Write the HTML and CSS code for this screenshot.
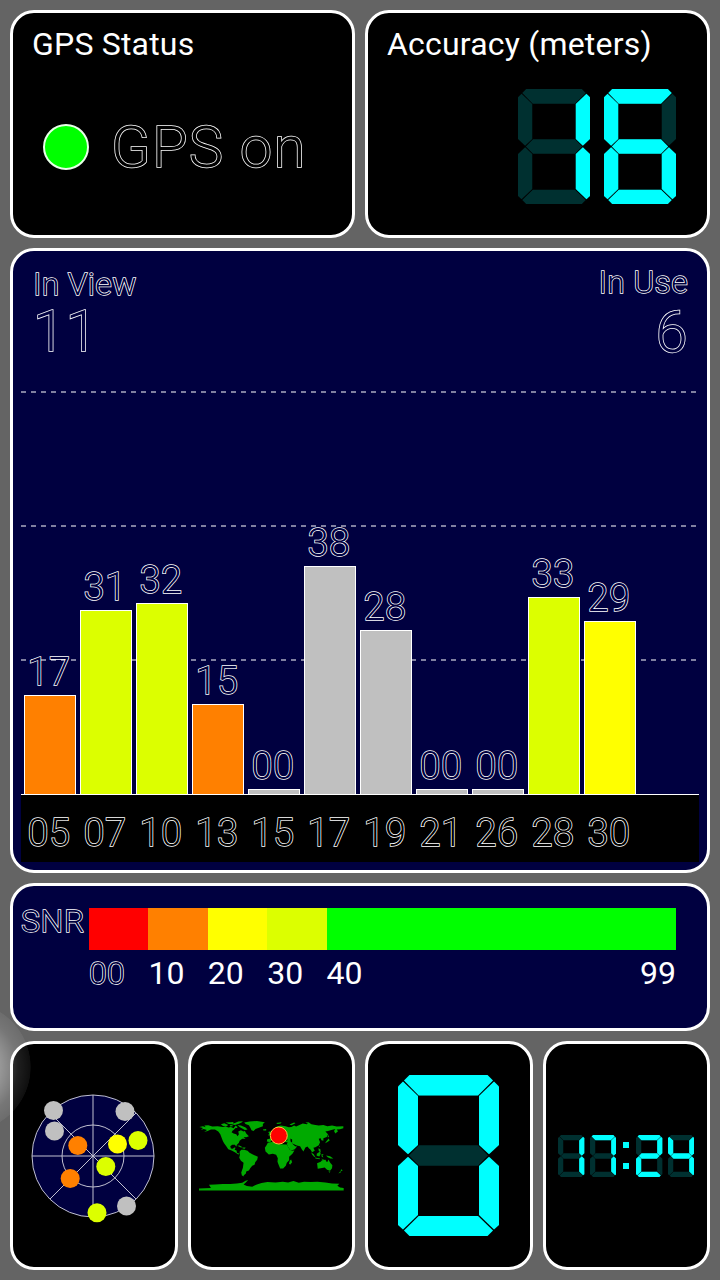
FILE: index.html
```html
<!DOCTYPE html>
<html lang="en">
<head>
    <meta charset="UTF-8">
    <meta name="viewport" content="width=device-width, initial-scale=1.0">
    <title>GPS Status</title>
    <link rel="stylesheet" href="styles.css">
</head>
<body>
    <!-- Seven segment digits -->
    <svg class="defs" width="0" height="0">
        <defs>
            <path id="sa" d="M6 5.5L11.5 0H89.5L95 5.5L80 20.5H20.7Z"/>
            <path id="sb" d="M96 6.5L101 11.5V70L91 79.3L81 70V21Z"/>
            <path id="sc" d="M91 81.7L101 91V150L96 154.5L81 140V91Z"/>
            <path id="sd" d="M6 155.5L11.5 161H89.5L95 155.5L80 141H20.7Z"/>
            <path id="se" d="M10 81.7L0 91V150L5 154.5L20 140V91Z"/>
            <path id="sf" d="M5 6.5L0 11.5V70L10 79.3L20 70V21Z"/>
            <path id="sg" d="M11 80.5L21 70.3H80L90 80.5L80 90.8H21Z"/>
            <g id="off" class="off">
                <use href="#sa"/><use href="#sb"/><use href="#sc"/><use href="#sd"/><use href="#se"/><use href="#sf"/><use href="#sg"/>
            </g>
            <g id="n0"><use href="#off"/><use href="#sa"/><use href="#sb"/><use href="#sc"/><use href="#sd"/><use href="#se"/><use href="#sf"/></g>
            <g id="n1"><use href="#off"/><use href="#sb"/><use href="#sc"/></g>
            <g id="n2"><use href="#off"/><use href="#sa"/><use href="#sb"/><use href="#sg"/><use href="#se"/><use href="#sd"/></g>
            <g id="n4"><use href="#off"/><use href="#sf"/><use href="#sg"/><use href="#sb"/><use href="#sc"/></g>
            <g id="n6"><use href="#off"/><use href="#sa"/><use href="#sf"/><use href="#sg"/><use href="#se"/><use href="#sc"/><use href="#sd"/></g>
            <g id="n7"><use href="#off"/><use href="#sa"/><use href="#sb"/><use href="#sc"/></g>
        </defs>
    </svg>

    <div class="screen">
        <div class="row">
            <div class="panel status">
                <h2>GPS Status</h2>
                <div class="state">
                    <span class="led"></span>
                    <span class="outline big gps-on">GPS on</span>
                </div>
            </div>
            <div class="panel accuracy">
                <h2>Accuracy (meters)</h2>
                <div class="lcd">
                    <svg viewBox="0 0 101 161"><use href="#n1"/></svg>
                    <svg viewBox="0 0 101 161"><use href="#n6"/></svg>
                </div>
            </div>
        </div>

        <!-- Satellite signal chart -->
        <div class="panel signal">
            <div class="counts">
                <div class="count">
                    <span class="outline">In View</span>
                    <span class="outline big">11</span>
                </div>
                <div class="count right">
                    <span class="outline">In Use</span>
                    <span class="outline big">6</span>
                </div>
            </div>
            <div class="plot">
                <div class="sat"><span class="outline">17</span><i class="bar orange" style="height: 99px"></i></div>
                <div class="sat"><span class="outline">31</span><i class="bar lime" style="height: 184px"></i></div>
                <div class="sat"><span class="outline">32</span><i class="bar lime" style="height: 191px"></i></div>
                <div class="sat"><span class="outline">15</span><i class="bar orange" style="height: 90px"></i></div>
                <div class="sat"><span class="outline">00</span><i class="bar grey" style="height: 5px"></i></div>
                <div class="sat"><span class="outline">38</span><i class="bar grey" style="height: 228px"></i></div>
                <div class="sat"><span class="outline">28</span><i class="bar grey" style="height: 164px"></i></div>
                <div class="sat"><span class="outline">00</span><i class="bar grey" style="height: 5px"></i></div>
                <div class="sat"><span class="outline">00</span><i class="bar grey" style="height: 5px"></i></div>
                <div class="sat"><span class="outline">33</span><i class="bar lime" style="height: 197px"></i></div>
                <div class="sat"><span class="outline">29</span><i class="bar yellow" style="height: 173px"></i></div>
            </div>
            <div class="ids">
                <span class="outline">05</span>
                <span class="outline">07</span>
                <span class="outline">10</span>
                <span class="outline">13</span>
                <span class="outline">15</span>
                <span class="outline">17</span>
                <span class="outline">19</span>
                <span class="outline">21</span>
                <span class="outline">26</span>
                <span class="outline">28</span>
                <span class="outline">30</span>
            </div>
        </div>

        <!-- SNR scale -->
        <div class="panel snr">
            <span class="outline snr-name">SNR</span>
            <div class="scale">
                <div class="step"><i class="red"></i><span class="outline">00</span></div>
                <div class="step"><i class="orange"></i><span>10</span></div>
                <div class="step"><i class="yellow"></i><span>20</span></div>
                <div class="step"><i class="lime"></i><span>30</span></div>
                <div class="step last">
                    <i class="green"></i>
                    <div class="ends"><span>40</span><span>99</span></div>
                </div>
            </div>
        </div>

        <div class="row">
            <div class="panel tile">
                <svg class="radar" viewBox="0 0 124 124">
                    <g class="grid">
                        <circle class="sky" cx="62" cy="62" r="61"/>
                        <circle cx="62" cy="62" r="31"/>
                        <path d="M62 1V123M1 62H123M19 19L105 105M105 19L19 105"/>
                    </g>
                    <g fill="#c0c0c0">
                        <circle cx="22.5" cy="16.5" r="9.5"/>
                        <circle cx="23.5" cy="37" r="9.5"/>
                        <circle cx="94" cy="17.5" r="9.5"/>
                        <circle cx="95.5" cy="112" r="9.5"/>
                    </g>
                    <g fill="#ff8000">
                        <circle cx="46.8" cy="51.5" r="9.5"/>
                        <circle cx="39.2" cy="84.5" r="9.5"/>
                    </g>
                    <circle cx="86.5" cy="50" r="9.5" fill="#ffff00"/>
                    <g fill="#dcff00">
                        <circle cx="107" cy="46.5" r="9.5"/>
                        <circle cx="74.8" cy="72.5" r="9.5"/>
                        <circle cx="66" cy="118.8" r="9.5"/>
                    </g>
                </svg>
            </div>
            <div class="panel tile">
                <svg class="map" viewBox="24 62 436 212">
                    <g class="land">
                        <!-- North America -->
                        <path d="M25 82L36 80L44 83L40 78L52 77L64 81L80 80L96 82L104 80L112 84L120 82L128 86L134 78L140 82L136 90L126 92L122 98L128 102L136 104L140 110L144 104L142 96L150 92L158 96L162 94L166 102L174 110L166 113L158 112L164 118L154 118L146 124L144 130L138 136L136 142L132 136L124 136L118 140L120 147L126 148L130 144L134 145L131 151L137 153L138 160L146 163L142 165L132 158L122 153L112 149L106 140L100 132L96 125L92 115L88 104L82 96L72 90L60 90L50 94L40 97L48 91L38 88L30 91L36 85Z"/>
                        <path d="M90 74L100 71L112 76L108 79L96 79ZM104 69L118 68L128 67L126 72L132 70L142 66L156 65L152 69L142 73L132 76L122 74L114 73ZM140 76L150 78L164 84L170 90L162 91L154 87L146 82ZM116 77L124 76L126 80L118 81Z"/>
                        <path d="M160 69L176 66L198 64L222 68L216 73L216 80L206 84L194 88L188 94L182 92L178 84L174 77L164 73Z"/>
                        <path d="M139 139L146 138L155 143L150 144ZM155 144L164 144L162 148L155 147Z"/>
                        <!-- South America -->
                        <path d="M146 157L151 151L160 151L170 154L176 160L186 165L201 172L199 181L193 188L191 196L184 199L178 206L174 213L166 216L165 222L158 228L160 231L153 228L151 219L156 205L158 190L150 184L145 175L147 166Z"/>
                        <!-- Europe and Asia -->
                        <path d="M228 126L229 119L239 117L236 111L247 106L253 99L246 96L248 88L258 81L270 78L284 80L294 83L302 82L310 78L316 81L326 76L336 72L348 74L354 69L362 74L374 76L384 78L398 76L410 80L424 78L438 81L458 80L458 86L448 89L438 90L442 95L434 102L430 94L434 88L422 91L412 94L404 96L412 104L408 112L398 116L398 124L392 122L390 116L384 118L388 128L384 137L374 143L368 145L372 154L364 158L359 150L355 147L350 141L344 144L338 156L333 149L328 140L318 138L310 134L303 131L313 140L319 141L312 149L300 154L291 141L288 133L291 129L280 127L276 129L270 123L260 117L263 126L254 119L244 120L238 128Z"/>
                        <path d="M232 97L239 95L243 106L232 108L235 102ZM216 90L226 88L226 93L218 93ZM256 70L272 68L270 72L260 73ZM296 75L310 69L314 71L302 77ZM344 69L356 68L350 72Z"/>
                        <path d="M412 105L415 112L411 113ZM414 117L417 123L409 128L403 131L407 125ZM386 138L388 142L385 142ZM383 146L389 149L390 160L384 154Z"/>
                        <!-- Africa -->
                        <path d="M231 130L246 127L256 127L259 132L270 134L288 135L296 149L302 154L311 153L305 163L295 172L295 182L288 190L285 199L277 207L268 207L264 197L260 187L261 176L256 166L246 163L234 165L224 156L222 145L227 137Z"/>
                        <path d="M301 180L304 188L298 196L295 191L297 184Z"/>
                        <!-- Australia and islands -->
                        <path d="M361 158L369 164L374 173L370 172L364 165ZM373 174L388 177L387 179L374 177ZM378 163L387 157L390 163L386 171L378 169ZM392 164L399 164L395 168L398 174L393 172ZM406 168L418 170L428 177L419 177L411 173ZM391 178L402 179L396 181Z"/>
                        <path d="M379 191L390 187L394 182L405 181L406 186L411 187L413 180L418 189L425 197L424 206L418 214L409 211L402 204L390 206L381 208L380 199ZM413 216L419 216L417 220ZM451 209L456 212L450 216ZM449 215L451 218L443 222Z"/>
                        <!-- Antarctica -->
                        <path d="M24 267L60 266L54 256L72 255L96 254L118 254L138 252L154 250L164 244L172 242L164 250L158 255L168 260L184 262L196 256L212 251L230 248L254 249L276 247L292 249L308 245L324 250L340 247L360 248L380 247L404 249L424 252L446 253L440 259L448 264L459 266V273H24Z"/>
                    </g>
                    <path class="water" d="M134 85L146 85L140 90L139 98L132 96L128 91ZM258 94L264 89L268 91L262 98ZM276 121L288 118L291 122L280 124ZM299 117L304 120L304 130L299 125Z"/>
                    <circle class="marker" cx="264" cy="108" r="25.5"/>
                </svg>
            </div>
            <div class="panel tile">
                <svg class="speed" viewBox="0 0 101 161"><use href="#n0"/></svg>
            </div>
            <div class="panel tile clock-tile">
                <div class="clock">
                    <svg viewBox="0 0 101 161"><use href="#n1"/></svg>
                    <svg viewBox="0 0 101 161"><use href="#n7"/></svg>
                    <span class="colon"></span>
                    <svg viewBox="0 0 101 161"><use href="#n2"/></svg>
                    <svg viewBox="0 0 101 161"><use href="#n4"/></svg>
                </div>
            </div>
        </div>
    </div>
    <div class="touch"></div>
</body>
</html>
```
FILE: styles.css
```css
* {
    box-sizing: border-box;
}
body {
    margin: 0;
    background-color: #646464;
    color: white;
    font-family: Roboto, "Liberation Sans", sans-serif;
    font-size: 32px;
    line-height: 38px;
    overflow: hidden;
}
.defs {
    position: absolute;
}
.screen {
    display: grid;
    grid-template-rows: 228px 625px 148px 229px;
    gap: 10px;
    height: 1280px;
    padding: 10px;
}
.row {
    display: grid;
    grid-auto-flow: column;
    grid-auto-columns: minmax(0, 1fr);
    gap: 10px;
}
.panel {
    border: 3px solid white;
    border-radius: 24px;
    background-color: black;
}
h2 {
    margin: 0;
    font-size: 32px;
    font-weight: normal;
    line-height: 38px;
    letter-spacing: 0.2px;
}
/* the fill hides the inner half of the stroke */
.outline {
    color: #000040;
    font-weight: 350;
    letter-spacing: 0.3px;
    -webkit-text-stroke: 1.5px white;
    paint-order: stroke fill;
}
.big {
    font-size: 58px;
    line-height: 60px;
}

/* Top row */
.status,
.accuracy {
    padding: 12px 19px;
}
.state {
    display: flex;
    align-items: center;
    gap: 22px;
    margin: 54px 0 0 11px;
}
.led {
    width: 46px;
    height: 46px;
    border: 2px solid #e8ffe8;
    border-radius: 50%;
    background-color: #00ff00;
}
.gps-on {
    color: black;
    letter-spacing: 1.2px;
}
.lcd {
    display: flex;
    justify-content: flex-end;
    gap: 14px;
    margin: 26px 12px 0 0;
}
.lcd svg {
    width: 72px;
    height: 115px;
}
svg {
    display: block;
    fill: #00ffff;
}
.off {
    fill: #003030;
}

/* Chart */
.signal,
.snr {
    background-color: #000040;
}
.signal {
    display: flex;
    flex-direction: column;
    padding: 0 8px 8px;
}
.counts {
    display: flex;
    justify-content: space-between;
    height: 110px;
    padding: 14px 11px 0 12px;
}
.count {
    display: flex;
    flex-direction: column;
}
.count .big {
    margin-top: -2px;
}
.right {
    align-items: flex-end;
    margin-top: -2px;
}
.right .big {
    margin-top: 1px;
}
.plot {
    display: flex;
    align-items: flex-end;
    gap: 4px;
    height: 434px;
    padding-left: 3px;
    border-bottom: 1px solid white;
    background-image:
        repeating-linear-gradient(90deg, #8080a0 0 5px, transparent 5px 10px),
        repeating-linear-gradient(90deg, #8080a0 0 5px, transparent 5px 10px),
        repeating-linear-gradient(90deg, #8080a0 0 5px, transparent 5px 10px);
    background-size: 100% 2px;
    background-position: 0 30px, 0 164px, 0 298px;
    background-repeat: no-repeat;
}
.sat {
    width: 52px;
    text-align: center;
    font-size: 38px;
    line-height: 46px;
}
.sat span {
    display: block;
    margin-left: -2px;
}
.bar {
    display: block;
    border: 1px solid white;
    border-bottom: 0;
}
.ids {
    display: flex;
    gap: 4px;
    height: 67px;
    padding: 15px 0 0 2px;
    background-color: black;
    font-size: 38px;
    line-height: 46px;
}
.ids span {
    width: 52px;
    color: black;
    text-align: center;
}
.red { background-color: #ff0000; }
.orange { background-color: #ff8000; }
.yellow { background-color: #ffff00; }
.lime { background-color: #dcff00; }
.green { background-color: #00ff00; }
.grey { background-color: #c0c0c0; }

/* SNR scale */
.snr {
    display: flex;
    padding: 22px 31px 0 8px;
}
.snr-name {
    width: 68px;
    margin-top: -6px;
    letter-spacing: 0.6px;
}
.scale {
    display: flex;
    flex: 1;
}
.step {
    width: 59.4px;
}
.step i {
    display: block;
    height: 42px;
    margin-bottom: 4px;
}
.last {
    flex: 1;
}
.ends {
    display: flex;
    justify-content: space-between;
}

/* Bottom row */
.tile {
    display: flex;
    align-items: center;
    justify-content: center;
}
.radar {
    width: 124px;
    height: 124px;
    margin-right: 1px;
    overflow: visible;
}
.grid {
    fill: none;
    stroke: #c0c0d0;
    stroke-width: 1;
}
.grid .sky {
    fill: #000040;
}
.map {
    width: 145px;
    height: 71px;
}
.land {
    fill: #00aa00;
}
.water {
    fill: black;
}
.marker {
    fill: #ff0000;
    stroke: #ffc040;
    stroke-width: 3;
}
.speed {
    width: 101px;
    height: 161px;
}
.clock-tile {
    justify-content: flex-end;
    padding-right: 13px;
}
.clock {
    display: flex;
    align-items: center;
    gap: 5px;
}
.clock svg {
    width: 26.4px;
    height: 42px;
}
.colon {
    width: 6px;
    height: 27px;
    margin: 0 2px;
    border: solid #00ffff;
    border-width: 6px 0;
}

/* Floating button at the screen edge */
.touch {
    position: absolute;
    left: -99px;
    top: 1002px;
    width: 130px;
    height: 130px;
    border-radius: 50%;
    background: radial-gradient(closest-side, rgba(255, 255, 255, 0.35) 50%, rgba(255, 255, 255, 0.12) 80%, rgba(255, 255, 255, 0.06) 99%, transparent);
}
```
